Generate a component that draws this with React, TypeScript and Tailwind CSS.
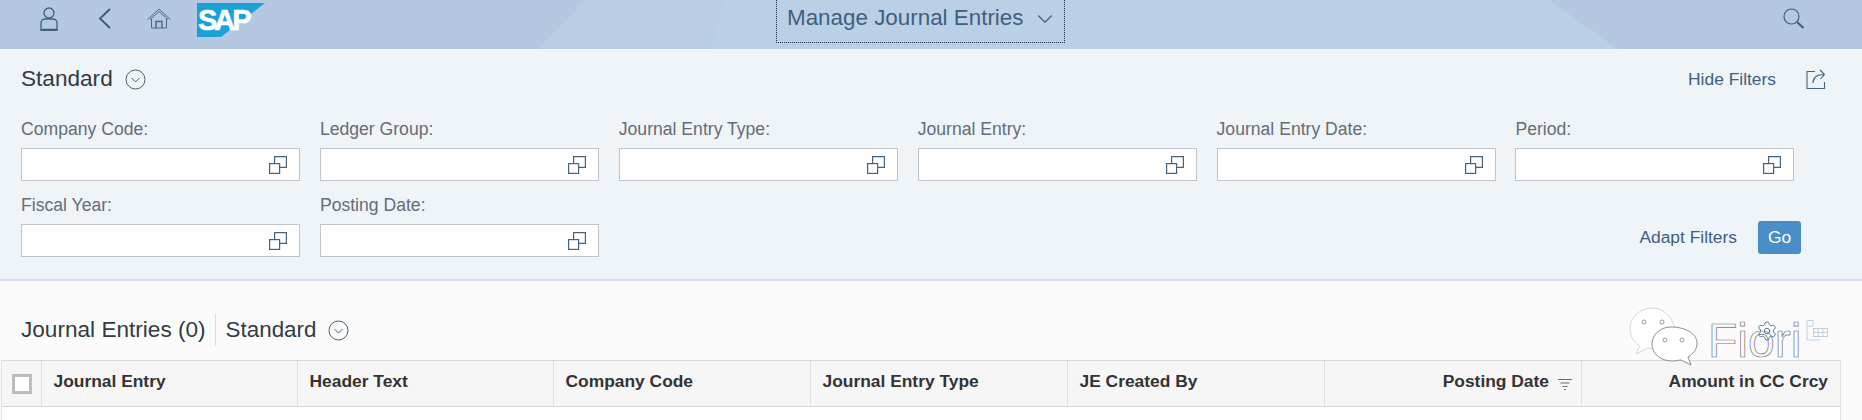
import React from 'react';
import { ChevronDown, Settings } from 'lucide-react';

const SANS = 'font-["Liberation_Sans",Arial,sans-serif]';

function ValueHelpIcon() {
  return (
    <svg width="18" height="18" viewBox="0 0 18 18" fill="none" stroke="#47627c" strokeWidth="1.2">
      <rect x="0.6" y="7.6" width="10" height="9.8" />
      <path d="M5.6 7.5V0.6H17.4V11.4H10.7" />
    </svg>
  );
}

function CircleChevron({ className }: { className?: string }) {
  return (
    <svg className={className} width="21" height="21" viewBox="0 0 21 21" fill="none" stroke="#47627c" strokeWidth="1">
      <circle cx="10.5" cy="10.5" r="9.5" />
      <path d="M6.5 9L10.5 13L14.5 9" />
    </svg>
  );
}

function PersonIcon() {
  return (
    <svg width="18" height="24" viewBox="0 0 18 24" fill="none" stroke="#3f5f80" strokeWidth="1.3">
      <circle cx="9" cy="6" r="5" />
      <path d="M1 22.5V16C1 13.5 3 12 5 12H13C15 12 17 13.5 17 16V22.5Z" />
      <path d="M0.5 23H17.5" strokeWidth="2" />
    </svg>
  );
}

function BackIcon() {
  return (
    <svg width="13" height="21" viewBox="0 0 13 21" fill="none" stroke="#3f5f80" strokeWidth="2" className="relative ml-[40px] mt-[8px]">
      <path d="M12 1L2 10.5L12 20" />
    </svg>
  );
}

function HomeIcon() {
  return (
    <svg width="24" height="21" viewBox="0 0 24 21" fill="none" stroke="#4a6886" strokeWidth="1" className="relative ml-[36px] mt-[8px]">
      <path d="M0.5 11.5L12 1L23.5 11.5" />
      <path d="M3 11.5L12 3.5L21 11.5" />
      <path d="M4.5 10.5V20H19.5V10.5" />
      <path d="M9 20V13.5H15V20" strokeWidth="1.4" />
    </svg>
  );
}

function SearchIcon() {
  return (
    <svg width="22" height="21" viewBox="0 0 22 21" fill="none" stroke="#3f5f80" strokeWidth="1.2" className="relative ml-auto mr-[57px] mt-[8px]">
      <circle cx="8.5" cy="8.5" r="7.5" />
      <path d="M14 14L20.5 20" strokeWidth="2.2" />
    </svg>
  );
}

function SapLogo() {
  return (
    <svg width="68" height="34" viewBox="0 0 68 34" className="relative ml-[26px] mt-[3px] shrink-0">
      <polygon points="0,0 68,0 24,34 0,34" fill="#1ba0d8" />
      <text x="1" y="27" fill="#fff" stroke="#fff" strokeWidth="0.6" fontFamily="Liberation Sans" fontWeight="700" fontSize="29" letterSpacing="-3">
        SAP
      </text>
    </svg>
  );
}

function ShareIcon() {
  return (
    <svg width="20" height="20" viewBox="0 0 20 20" fill="none" stroke="#47627c" strokeWidth="1.1">
      <path d="M9 2.5H1V19.5H18.5V13" />
      <path d="M7 14C7 8.5 10 5.5 18 5.5M14 1L18.5 5.5L14.5 10" />
    </svg>
  );
}

function Field({ label }: { label: string }) {
  return (
    <div className="w-[279px] shrink-0">
      <div className="h-[25px] text-[17.6px] leading-[25px] text-[#666d75]">{label}</div>
      <div className="mt-[6px] h-[33px] border border-[#bfc5cb] bg-white flex items-center justify-end pr-[12px]">
        <ValueHelpIcon />
      </div>
    </div>
  );
}

function WeChatMark() {
  return (
    <svg width="70" height="60" viewBox="0 0 70 60" className="absolute left-[1629px] top-[307px]">
      <path d="M24 1C11 1 1 10 1 22C1 30 6 36 11 39L7 47L19 41C27 43 40 42 45 30C49 18 38 1 24 1Z" fill="#fff" stroke="#d6d6d6" />
      <path d="M42 20C30 20 23 29 23 37C23 47 32 54 43 54C47 54 50 53 52 53L62 58L59 50C64 47 68 43 68 36C68 27 57 20 42 20Z" fill="#fff" stroke="#8d8d8d" />
      <circle cx="15" cy="15" r="2" fill="none" stroke="#9a9a9a" />
      <circle cx="33" cy="15" r="2" fill="none" stroke="#9a9a9a" />
      <circle cx="36" cy="33" r="2" fill="none" stroke="#9a9a9a" />
      <circle cx="53" cy="33" r="2" fill="none" stroke="#9a9a9a" />
    </svg>
  );
}

function TableIcon() {
  return (
    <svg width="22" height="21" viewBox="0 0 22 21" fill="none" stroke="#c3d0dc" strokeWidth="1" className="absolute left-[1806px] top-[320px]">
      <path d="M7 0.5H1V20H14" />
      <path d="M7 0.5V6H1" />
      <rect x="7.5" y="8.5" width="14" height="8" />
      <path d="M12 8.5V16.5M17 8.5V16.5M7.5 12.5H21.5" />
    </svg>
  );
}

function SortIcon() {
  return (
    <svg width="14" height="12" viewBox="0 0 14 12" fill="none" stroke="#6b6b6b" strokeWidth="1" className="ml-[9px] mt-[4px]">
      <path d="M0 1.5H14M2.5 5H11.5M4.5 8.5H9.5M6 11.5H8" />
    </svg>
  );
}

const columns = [
  { title: 'Journal Entry', width: 'w-[256px]' },
  { title: 'Header Text', width: 'w-[256px]' },
  { title: 'Company Code', width: 'w-[257px]' },
  { title: 'Journal Entry Type', width: 'w-[257px]' },
  { title: 'JE Created By', width: 'w-[257px]' },
];

export default function App() {
  return (
    <div className={`${SANS} relative h-[420px] w-[1862px] overflow-hidden bg-[#fbfbfb]`}>
      {/* shell bar */}
      <header className="relative h-[49px] bg-[#b4c9e1] flex items-start text-[#3f5f80]">
        <svg width="1862" height="49" className="absolute left-0 top-0">
          <polygon points="585,0 1549,0 1617,49 537,49" fill="#b9cee5" />
          <polygon points="725,0 1549,0 1617,49 711,49" fill="#bad0e7" />
        </svg>
        <div className="relative flex items-start pl-[40px] pt-[7px]">
          <PersonIcon />
        </div>
        <BackIcon />
        <HomeIcon />
        <SapLogo />
        <div className="relative ml-[511px] -mt-[1px] h-[44px] w-[289px] border border-dotted border-[#1f2d3d] flex items-center pl-[10px] pb-[6px]">
          <span className="text-[22.4px] whitespace-nowrap">Manage Journal Entries</span>
          <ChevronDown className="ml-[9px] mt-[2px]" size={26} strokeWidth={1} />
        </div>
        <SearchIcon />
      </header>

      {/* filter bar */}
      <section className="h-[232px] bg-[#eff4f9] border-b-[2px] border-[#d3e0eb] pl-[21px]">
        <div className="flex items-center h-[60px] pr-[36px]">
          <span className="text-[22.6px] text-[#333b44]">Standard</span>
          <CircleChevron className="ml-[12px]" />
          <span className="ml-auto text-[17.4px] text-[#3f5f80]">Hide Filters</span>
          <div className="ml-[30px]">
            <ShareIcon />
          </div>
        </div>
        <div className="flex gap-x-[19.9px] mt-[8px]">
          {['Company Code:', 'Ledger Group:', 'Journal Entry Type:', 'Journal Entry:', 'Journal Entry Date:', 'Period:'].map(label => (
            <Field key={label} label={label} />
          ))}
        </div>
        <div className="flex gap-x-[19.9px] mt-[12px] pr-[61px]">
          <Field label="Fiscal Year:" />
          <Field label="Posting Date:" />
          <div className="ml-auto mt-[28px] flex items-center h-[33px]">
            <span className="text-[17.4px] text-[#3f5f80]">Adapt Filters</span>
            <button className="ml-[21px] h-[33px] w-[43px] rounded-[3px] bg-[#4a8ec9] text-[17.4px] text-white">Go</button>
          </div>
        </div>
      </section>

      {/* table toolbar */}
      <div className="h-[79px] pl-[21px] flex items-center pt-[18px]">
        <span className="text-[22.6px] text-[#333b44]">Journal Entries (0)</span>
        <div className="ml-[9px] mr-[10px] h-[32px] w-px bg-[#dcdcdc]" />
        <span className="text-[22.4px] text-[#333b44]">Standard</span>
        <CircleChevron className="ml-[12px] mt-px" />
      </div>

      {/* table */}
      <div className="ml-[1px] w-[1840px] h-[60px] border-x border-[#e0e0e0] bg-white">
        <div className="flex h-[47px] bg-[#f6f6f6] border-y border-[#d9d9d9] text-[17.4px] font-bold text-[#333333]">
          <div className="w-[40px] shrink-0 border-r border-[#e0e0e0] flex items-center pl-[10px]">
            <div className="h-[20px] w-[20px] border-[3px] border-[#bdbdbd] bg-white" />
          </div>
          {columns.map(col => (
            <div key={col.title} className={`${col.width} shrink-0 border-r border-[#e0e0e0] flex items-center pl-[11.5px] pb-[4px] whitespace-nowrap`}>
              {col.title}
            </div>
          ))}
          <div className="w-[257px] shrink-0 border-r border-[#e0e0e0] flex items-center justify-end pr-[9px] pb-[4px] whitespace-nowrap">
            Posting Date
            <SortIcon />
          </div>
          <div className="flex-1 flex items-center justify-end pr-[12px] pb-[4px] whitespace-nowrap">Amount in CC Crcy</div>
        </div>
      </div>

      {/* watermark over the toolbar */}
      <WeChatMark />
      <span className="absolute left-[1708px] top-[317px] text-[48px] leading-[48px] font-light text-[#fbfbfb] [-webkit-text-stroke:0.7px_#777777]">
        Fiori
      </span>
      <Settings className="absolute left-[1756px] top-[320px]" size={22} strokeWidth={1} color="#47729c" />
      <TableIcon />
    </div>
  );
}
